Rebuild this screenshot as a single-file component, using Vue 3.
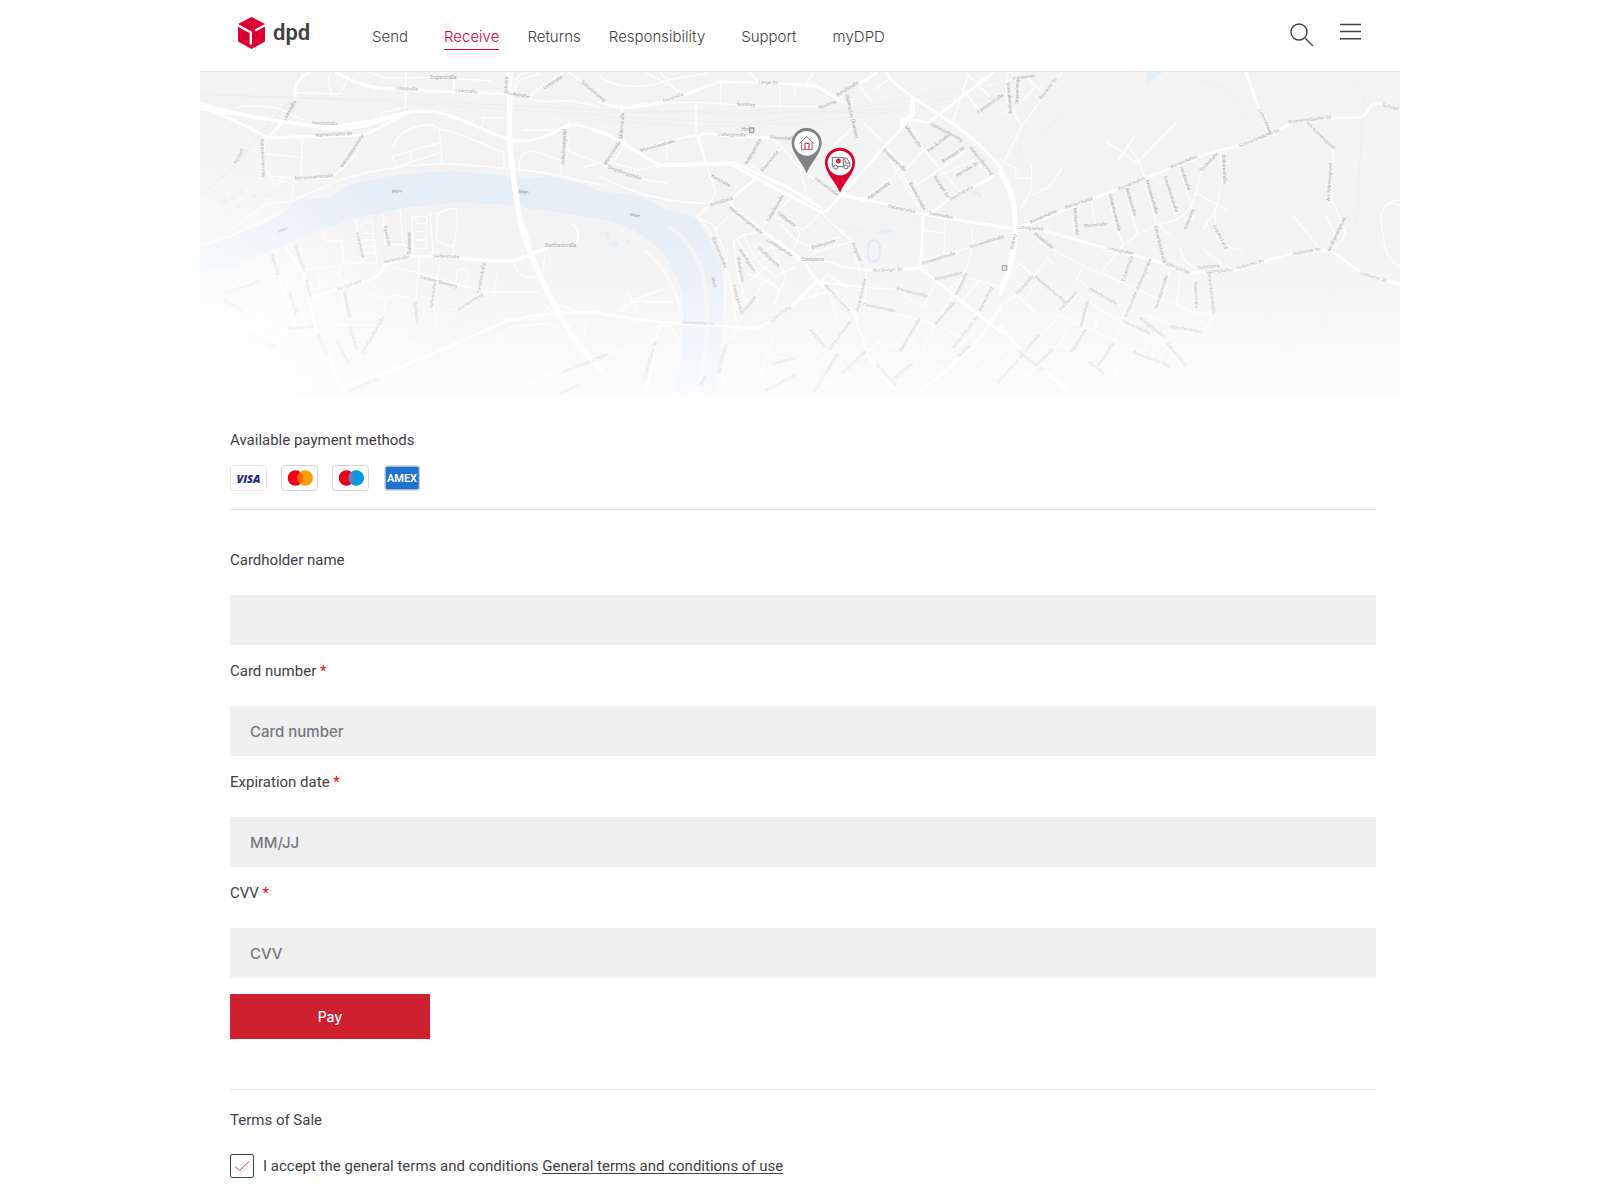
<script setup>
import { ref } from 'vue'

const navItems = [
  { label: 'Send' },
  { label: 'Receive', active: true, wide: true },
  { label: 'Returns' },
  { label: 'Responsibility' },
  { label: 'Support', wide: true },
  { label: 'myDPD', wide: true },
]

const fields = [
  { id: 'holder', label: 'Cardholder name', placeholder: '', required: false },
  { id: 'number', label: 'Card number', placeholder: 'Card number', required: true },
  { id: 'expiry', label: 'Expiration date', placeholder: 'MM/JJ', required: true },
  { id: 'cvv', label: 'CVV', placeholder: 'CVV', required: true },
]
const values = ref({ holder: '', number: '', expiry: '', cvv: '' })
const accepted = ref(true)

// The map is drawn in three sheets of 1200 units: west, centre and east.
const sheets = [
  {
    x: 0,
    rail: ['M0 100L600 128L1200 165', 'M0 106L600 120L1200 150', 'M600 855L760 790L930 735'],
    major: [
      'M0 128C80 160 250 185 380 206C480 215 540 180 620 158C720 135 800 190 900 228L940 245',
      'M0 146C100 160 240 190 380 200C500 195 570 165 640 153',
      'M0 132L205 233L480 226C540 215 570 180 610 165',
      'M935 240C1010 255 1060 215 1100 198C1130 190 1160 200 1200 216',
      'M410 38C470 70 510 88 600 88L770 97L925 102',
      'M330 712L420 685C490 665 545 660 552 615L630 590L720 590L870 603L940 603L1040 565',
      'M425 980C560 950 760 850 920 785C1000 760 1100 755 1200 760',
      'M255 560L310 640L345 800L430 990',
      'M285 115C280 75 300 45 330 38',
      'M252 178L235 200L205 233',
    ],
    motor: ['M930 36L928 230C936 330 945 400 962 490C980 560 1010 630 1050 710L1110 820L1200 930'],
    minor: [
      'M100 142C200 132 240 140 285 170C340 192 430 200 500 180',
      'M288 98L420 102L447 50', 'M390 38L386 70L396 102', 'M510 38L560 54L690 52L870 62',
      'M618 38L616 142L545 158V175', 'M762 52V90', 'M200 235C185 290 190 330 210 348L295 356L390 355C440 315 480 290 485 228',
      'M195 280L300 292', 'M307 235L303 356', 'M210 348L222 375L255 362',
      'M100 505L200 430L270 425L420 360C540 320 680 310 760 312C850 318 960 325 1070 345L1200 375',
      'M582 262C585 220 640 195 700 195L718 210L727 310', 'M575 290L720 248', 'M632 268V312M575 290L590 320L727 276',
      'M718 208C790 220 830 245 912 278V320', 'M848 195V173H920', 'M970 210H1080M958 325C955 290 965 275 1000 272L1080 300L1085 340',
      'M1103 220L1104 272L1200 310M1150 322L1190 312', 'M1105 180V198',
      'M985 110L1040 70L1090 38', 'M1105 36L1200 105', 'M985 115L1020 125L1110 122L1200 140', 'M945 88C940 60 955 38 985 38M945 90L960 60L1020 40',
      'M80 690L215 650L255 640L470 608L530 610', 'M0 560L90 530L250 455',
      'M365 505L380 545L425 540L432 608', 'M465 480L470 500L485 605', 'M550 465L555 550L635 558', 'M600 450L610 555',
      'M636 590V470H648V500', 'M470 500L515 480L530 605', 'M490 520H520M490 540H525M490 560H525M490 580H528',
      'M650 470H680V565H640M650 490H680M650 515H680M650 540H680M690 460L700 590M710 460V545L760 560L765 585M710 465C740 445 765 440 770 450L772 500L760 560',
      'M552 615L660 640L845 695L1020 695', 'M658 600L645 740L658 815', 'M720 598L700 735L712 795', 'M770 650C770 620 800 620 805 640L795 682L765 675Z',
      'M850 615L838 700C820 740 780 745 755 748', 'M890 645L880 700', 'M450 655L425 700L445 800L465 880',
      'M500 700L560 715L545 790L505 870M560 715L590 705L640 715', 'M405 795L510 795L560 800', 'M415 618L422 660M350 615L360 680',
      'M215 590L240 660L280 790L310 870', 'M245 610L275 730L285 800L340 800', 'M175 665L188 770C220 800 240 810 280 810',
      'M190 770L155 815L220 865', 'M65 715L130 755M150 815L225 865M265 910L220 1005', 'M280 360L275 415',
      'M940 600C950 650 980 655 1010 650M1040 570C1060 610 1050 640 1010 625', 'M975 490L1000 600M1035 580L1030 625',
      'M865 870L930 800L1040 790C1080 800 1120 850 1160 900', 'M920 780L1070 775L1040 740', 'M1060 730L1130 755L1200 755',
      'M930 1000L1050 940L1200 895', 'M1160 760L1150 850M1040 560L1130 555C1140 520 1130 495 1115 495',
      'M545 850L600 865L655 840', 'M380 835L410 790M450 915L490 875M405 650L425 620',
    ],
  },
  {
    x: 1200,
    rail: ['M0 150L440 160L900 148L1200 80', 'M0 160L500 150L840 160L1200 110', 'M0 170L460 190L860 130L1200 60', 'M0 180L300 200L600 190L860 160L960 110', 'M960 470L880 530L720 500M610 600L760 600'],
    major: [
      'M0 216C70 240 120 290 180 314L400 308L560 380L665 445',
      'M170 318L390 312L545 395L660 455C690 460 700 425 725 405L850 265C890 220 920 190 940 155L940 130',
      'M860 38C880 80 940 110 1010 160C1080 200 1150 260 1200 320',
      'M925 178L985 188L1060 130L1180 38',
      'M725 405L870 435L970 463L1200 500',
      'M0 125C60 155 140 145 250 105L360 65L530 70L650 78L725 125',
      'M780 70L830 38', 'M1000 455L1050 415L1180 350', 'M485 510L605 600C625 615 630 640 650 662L760 755L805 890L880 985',
      'M650 665C600 720 540 765 500 790C460 815 420 800 340 795C200 795 80 775 0 760',
      'M970 465L962 625L1060 705L1200 815', 'M1200 745L1120 860L950 1008', 'M485 510L395 440C385 410 440 385 470 350',
      'M180 795L160 850C165 900 150 970 125 1008', 'M170 314L318 310L295 235C300 215 330 220 360 225L520 235', 'M800 630L960 625',
    ],
    motor: ['M940 118L935 150M905 190L940 160'],
    minor: [
      'M100 135C260 120 380 130 440 138L660 140L725 110', 'M65 135L72 250L40 310L120 330L170 315', 'M140 38L250 100', 'M0 50C50 90 150 85 200 60L320 40',
      'M180 36L245 110', 'M362 65V135M540 70V140M450 36L480 70M580 70L585 100M620 70L640 38',
      'M288 135V220M200 240V310M125 270L210 240L295 225', 'M520 235L545 260L600 325L620 405',
      'M318 310L345 390', 'M0 310L110 355L200 370', 'M0 350C100 400 200 430 330 430L345 400', 'M290 470L330 435L390 415',
      'M290 470C340 510 350 570 385 640L405 760L410 800', 'M295 475L340 495L380 590L375 760', 'M725 122C770 150 770 200 730 230L690 265',
      'M548 260L480 330L425 300', 'M550 395L520 450L485 510', 'M580 405L520 470L610 510L660 460', 'M615 340L700 390L722 405',
      'M665 460L755 545L780 640', 'M540 490L590 545L640 560L720 530', 'M610 600L650 575L755 545M605 605L670 600L730 620L795 630',
      'M485 515L430 525L400 545L415 650L430 700', 'M430 525L470 600L525 650L590 620', 'M415 545L475 640L540 690L560 650L545 625',
      'M440 640L490 660L470 700L430 765M490 660L540 690L520 740', 'M500 620L450 660M470 580L520 560L600 605M560 470L600 520L580 570',
      'M850 265L960 450', 'M850 255L905 310L880 350L790 415', 'M925 180L970 270L905 340L970 450M970 270L1045 235', 'M970 270L1085 400M945 380L1100 270',
      'M1010 350L1120 300L1180 350', 'M1200 110L1140 155L1090 90', 'M820 90L870 55M780 80L815 125M790 190L845 240',
      'M970 510L1035 520V460M1035 520L1030 600M975 600L1120 560L1200 540', 'M800 630L795 740L760 755',
      'M1115 500C1125 600 1085 660 1050 720', 'M1000 680L970 740L930 720L900 690L770 680L650 665', 'M790 735L880 760L960 780L930 860L830 850L800 880',
      'M1045 690L1090 650L1200 680M1060 705L1010 780L945 920L880 985', 'M1090 720L1140 660M1180 680L1140 760L1070 850',
      'M960 780L1020 800L1100 840M840 840L800 880L720 940L650 1000', 'M760 755L690 865L640 800M690 865L600 895L500 890M690 865L630 960L560 1000',
      'M690 870L740 930L770 1000M500 890L480 940L580 1000M520 840L500 890', 'M1000 900L1060 960L1090 1005M1100 880L1200 960M920 910L1000 960',
      'M130 570C200 620 235 700 250 790', 'M60 755L95 725H220M85 695L110 750M100 720L195 685', 'M375 800V835L400 830L425 800M375 835L370 980L340 1008',
      'M165 800H215L230 830L240 860M0 890L75 870L100 840M0 950L40 1008', 'M370 990L440 970L480 935', 'M600 720L700 690M690 700L710 780',
      'M345 510L385 470M500 520L540 620M450 600L480 580M640 710L680 640L740 680', 'M1060 180L1100 60M1100 40L1170 110',
    ],
  },
  {
    x: 2400,
    rail: ['M50 320L250 80M100 100L50 300', 'M600 60L690 90L740 190', 'M1060 60L1090 110L1070 490', 'M960 820L900 840L820 890M1000 640L960 820'],
    major: [
      'M45 500L95 490L280 415L436 355L600 290L660 270L720 258L820 222L880 185L990 173L1080 172C1110 165 1100 125 1140 130L1200 150',
      'M0 503L50 503L130 512L330 568L495 610L570 640L710 630L800 602L890 578L985 570C1030 590 1060 630 1100 645L1200 672',
      'M738 38L780 155L805 215', 'M0 800L80 890L200 990',
    ],
    motor: ['M0 335C40 400 45 430 46 510C45 600 20 650 0 700'],
    minor: [
      'M185 38L130 110L65 200L25 280L0 330', 'M20 38V120L65 195M0 165L30 150M20 60L80 50L130 100M80 50L105 80L60 130M35 38L60 90',
      'M0 300L45 325L50 355H95V315M95 355L90 400L60 450M95 405L150 380L185 325',
      'M320 245L420 315L436 355M415 305L528 188M355 300L405 228M380 250L420 310', 'M275 430L285 490M220 450L225 515M250 500L320 495L345 485',
      'M325 405L345 490L370 555L410 525L470 495L530 480C580 450 580 420 600 350L610 320L655 280', 'M375 390L412 520', 'M436 360L468 490L468 520L490 600',
      'M490 345L530 480', 'M540 325L575 440L580 470L560 505', 'M585 300L605 320', 'M660 275L668 350L650 440L612 505M668 300L690 312',
      'M645 445L645 520C660 560 700 565 728 572M590 400L680 450', 'M470 490L510 525M370 555L305 635', 'M540 565C550 600 570 620 590 625M612 565C630 600 660 590 660 612L595 628',
      'M920 190C990 240 1005 270 1000 300L990 410C1010 450 1030 490 1035 520C1030 550 1000 560 985 570', 'M880 468L960 565M980 468C1000 510 1010 530 1000 550',
      'M1200 420C1120 430 1145 500 1150 530C1155 590 1180 610 1200 620M1160 430L1200 435',
      'M105 520C120 560 140 555 250 618L360 665L460 710L580 755L635 765', 'M250 618L230 655L270 690L370 740', 'M140 590L160 610M60 610L100 650L40 710L0 740M60 610L0 680',
      'M145 595L100 650L190 725L225 700L370 790L500 860L545 910L690 1005', 'M395 590L370 660M450 605L415 690L380 770L340 850L300 920',
      'M510 635L470 755M540 650L530 735M515 625L580 660L585 750M625 645L635 765C635 800 610 815 570 815L440 765', 'M45 700L110 760M80 710L110 670',
      'M235 700L180 765L80 870L0 960', 'M265 730L250 800L220 870M170 765L300 820L400 870L540 930L530 1000', 'M290 780L285 810M205 800L180 850L120 910L70 960',
      'M180 850L300 935L390 985M350 920L340 980M440 850L420 890M465 860L450 910M490 870L475 920', 'M430 950L400 1000M430 965L500 1000', 'M0 880L100 960L150 1000M1140 1005L1170 985',
    ],
  },
]

// Each label runs from its first point to its second.
const streets = [
  ['Englerstraße', 692, 55, 768, 55], ['Linkstraße', 590, 88, 652, 90], ['Linkstraße', 768, 95, 830, 98], ['Linkstraße', 923, 102, 985, 112],
  ['Linkstraße', 1038, 84, 1084, 54], ['Schönbergweg', 1145, 68, 1210, 122], ['Schulstr', 922, 96, 924, 50], ['Horchstraße', 338, 190, 411, 194],
  ['Mainaschaffer Str', 350, 228, 454, 223], ['Linkstraße', 258, 178, 288, 125], ['Mörswiesenstraße', 195, 342, 190, 240], ['Mörswiesenstraße', 432, 315, 488, 230],
  ['Mörswiesenstraße', 290, 357, 393, 349], ['Aschaff', 108, 310, 132, 268], ['Schieferwegwald', 1093, 303, 1098, 215], ['Kastanienstr', 468, 518, 484, 590],
  ['Egerer Str', 552, 503, 562, 552], ['Sudetenstr', 633, 580, 633, 515], ['Seidelstraße', 556, 608, 625, 593], ['Seidelstraße', 702, 591, 774, 593],
  ['Stadtbadstraße', 1043, 560, 1120, 560], ['Am Dreispitz', 415, 690, 484, 665], ['Leiderer Stadtweg', 667, 655, 765, 680], ['Kapellenstraße', 840, 693, 855, 612],
  ['Hafenstraße', 698, 738, 708, 673], ['Ruhlandstr', 640, 728, 648, 788], ['Eisenbahnweg', 785, 745, 840, 710], ['Fliederstraße', 283, 560, 308, 630],
  ['Tulpenweg', 212, 585, 230, 640], ['Augasse', 316, 662, 326, 706], ['Großostheimer Str', 92, 695, 168, 670], ['Lindenstraße', 265, 697, 282, 755],
  ['Ostendstraße', 430, 698, 443, 765], ['Rosenstraße', 270, 808, 338, 802], ['Hauptstraße', 443, 795, 468, 876], ['Hafenbahnhofstraße', 495, 872, 550, 778],
  ['Waldstraße', 352, 828, 375, 880], ['Germanenstr', 410, 848, 440, 905], ['Darmstädter Str', 448, 995, 535, 960], ['Bergstraße', 67, 720, 128, 755],
  ['Heinrichstraße', 145, 820, 225, 865], ['Kleine Schönbuschallee', 1100, 935, 1210, 890], ['Hafenweg', 1092, 998, 1130, 980],
  ['Deustraße', 1392, 125, 1450, 105], ['Lange Str', 1677, 69, 1732, 71], ['Nordring', 1613, 135, 1662, 137], ['Nordring', 1860, 145, 1905, 127],
  ['Auhofstraße', 1915, 106, 1974, 70], ['Müllerstraße', 1268, 230, 1272, 160], ['Maximilianstraße', 1328, 272, 1420, 246], ['Münchstraße', 1220, 310, 1260, 248],
  ['Ludwigstraße', 1556, 226, 1636, 228], ['Elisenstraße', 1712, 235, 1784, 238], ['Hbf', 1625, 211, 1645, 211], ['Dingelbergstraße', 1228, 325, 1316, 356],
  ['Karlstraße', 1535, 350, 1585, 378], ['Kolpingstraße', 1645, 305, 1680, 245], ['Elisenstraße', 1692, 328, 1732, 280], ['Glattbacher Überfahrt', 1940, 120, 1962, 216],
  ['Schloßberg', 1538, 435, 1592, 418], ['Weißenburgerstraße', 1602, 455, 1668, 508], ['Luitpoldstraße', 1708, 480, 1750, 408], ['Treibgasse', 1735, 462, 1778, 496],
  ['Heinsestraße', 1848, 360, 1906, 402], ['Landingstraße', 1702, 542, 1772, 588], ['Platanenallee', 2066, 440, 2143, 457], ['Lindenallee', 2190, 463, 2255, 474],
  ['Fabrikstraße', 2010, 415, 2068, 372], ['Ernsthofstraße', 2050, 273, 2110, 330], ['Ernsthofstraße', 2128, 372, 2168, 446], ['Merlostraße', 2115, 200, 2158, 260],
  ['Fabrikstraße', 2190, 272, 2245, 230], ['Hohenzollernring', 2193, 195, 2283, 242], ['Hohenzollernring', 2310, 265, 2370, 340], ['Breslauer Str', 2232, 305, 2293, 266],
  ['Memeler Str', 2275, 347, 2334, 312], ['Danziger Str', 2202, 352, 2240, 410], ['Deschstraße', 2254, 418, 2318, 383], ['Fasanenstraße', 2345, 152, 2402, 112],
  ['Würzburger Str', 2020, 633, 2106, 629], ['Grünewaldstraße', 2175, 610, 2258, 584], ['Grünewaldstraße', 2322, 560, 2402, 535], ['Hofgasse', 1955, 552, 1976, 600],
  ['Badergasse', 1842, 563, 1900, 545], ['Sandgasse', 1812, 602, 1865, 602], ['Pfaffengasse', 1678, 570, 1730, 615], ['Schloßgasse', 1618, 572, 1658, 630],
  ['Webergasse', 1610, 592, 1624, 660], ['Suicardusstraße', 1538, 538, 1570, 616], ['Dalbergstraße', 1598, 675, 1620, 754], ['Stiftsgasse', 1625, 767, 1672, 705],
  ['Wermbachstraße', 1874, 680, 1943, 750], ['Löherstraße', 1715, 785, 1772, 742], ['Alexandrastraße', 1976, 750, 1998, 660], ['Cornelienstraße', 1992, 736, 2080, 755],
  ['Brentanostraße', 2100, 690, 2170, 708], ['Herrleinstraße', 2212, 790, 2264, 730], ['Darmstädter Str', 1448, 790, 1542, 794], ['Südring', 2280, 890, 2310, 857],
  ['Stadelmannstraße', 2108, 868, 2158, 782], ['Lamprechtstraße', 1895, 863, 1950, 790], ['Hefner-Alteneck-Str', 2270, 855, 2328, 780], ['Am Floßhafen', 1562, 935, 1580, 855],
  ['Großostheimer Str', 1340, 945, 1370, 845], ['Yorckstraße', 2270, 710, 2305, 635], ['Kneippstraße', 2212, 658, 2278, 642], ['Bismarckring', 2340, 760, 2382, 675],
  ['Hohenlohstraße', 1930, 940, 1998, 876], ['Lindestraße', 1725, 912, 1776, 898], ['Bodelschwinghstraße', 1855, 980, 1908, 895], ['Mattstraße', 2080, 960, 2144, 908],
  ['Kirchnerstraße', 2022, 910, 2092, 985], ['Kantstraße', 1830, 812, 1870, 862], ['Bergmannstraße', 1705, 990, 1785, 948],
  ['Frankenstr', 2444, 58, 2500, 50], ['Deutsche Str', 2527, 113, 2570, 58], ['Schwalbenweg', 2420, 74, 2428, 150], ['Drosselweg', 2455, 125, 2456, 62],
  ['Bismarckallee', 2495, 488, 2568, 456], ['Bismarckallee', 2600, 444, 2676, 418], ['Bismarckallee', 2758, 388, 2834, 357], ['Bismarckallee', 2916, 323, 2990, 292],
  ['Schmerlenbacher Str', 3124, 258, 3236, 214], ['Schmerlenbacher Str', 3270, 188, 3390, 174], ['Schmerl', 3548, 137, 3594, 149], ['Lohmühlweg', 3178, 155, 3205, 214],
  ['Am Krämersgrund', 3322, 193, 3396, 263], ['Am Krämersgrund', 3390, 414, 3396, 315], ['Am Krämersgrund', 3395, 562, 3432, 485], ['Yorckstraße', 3008, 330, 3052, 284],
  ['Kolbornstraße', 3066, 288, 3070, 362], ['Arndtstraße', 2941, 325, 2962, 385], ['Scharnhorststraße', 2889, 345, 2926, 457], ['Gneisenaustraße', 2838, 363, 2865, 455],
  ['Blücherstraße', 2777, 388, 2800, 462], ['Scharnhorststraße', 2727, 408, 2753, 507], ['Moltkestraße', 2620, 448, 2627, 518], ['Steinstraße', 2655, 500, 2720, 494],
  ['Kolbornstr', 2960, 505, 2983, 450], ['Lug ins Land', 3043, 502, 3072, 560], ['Rhönstraße', 2505, 525, 2552, 562], ['Ludwigsallee', 2453, 504, 2526, 510],
  ['Ludwigsallee', 2722, 566, 2798, 583], ['Ludwigsallee', 2895, 610, 2965, 640], ['Ludwigsallee', 3020, 637, 3096, 632], ['Haibacher Str', 3114, 626, 3190, 605],
  ['Haibacher Str', 3282, 583, 3360, 570], ['Haibacher Str', 3482, 642, 3558, 664], ['Sodenberg', 2997, 626, 3054, 619], ['Bessenbachstraße', 2866, 513, 2885, 592],
  ['Tulpenstraße', 2775, 656, 2797, 595], ['Hollerbergstraße', 2820, 680, 2850, 608], ['Rotenbuchstraße', 2868, 757, 2908, 634], ['Kaiserstraße', 2982, 662, 2985, 746],
  ['Schmittbuschstraße', 3024, 648, 3035, 746], ['Altdorferstraße', 2670, 690, 2743, 730], ['Kneippstraße', 2782, 767, 2810, 700], ['Bessenbacher Weg', 2508, 655, 2588, 723],
  ['Yorckstraße', 2456, 698, 2498, 653], ['Flachstraße', 2586, 748, 2630, 700], ['Mozartstraße', 2648, 795, 2666, 726], ['Cranachstraße', 2771, 787, 2845, 820],
  ['Röntgengraben', 2820, 777, 2888, 830], ['Altdorferstraße', 2915, 803, 2996, 816], ['Cranachstraße', 2905, 858, 2948, 912], ['Bessenbacher Weg', 2805, 880, 2902, 918],
  ['Kneippstraße', 2700, 915, 2740, 855], ['Händelstraße', 2622, 870, 2656, 815], ['Fichtestraße', 2476, 878, 2518, 828], ['Würzburger Str', 2458, 880, 2525, 930],
  ['Südring', 2440, 566, 2448, 523], ['Kantstraße', 2518, 912, 2560, 870], ['Rhönweg', 2662, 908, 2710, 940], ['Schweinheimer Str', 2405, 958, 2462, 895],
]
const waterNames = [
  ['Main', 575, 397, 606, 395], ['Main', 955, 397, 986, 399], ['Main', 236, 518, 266, 505],
  ['Main', 1290, 466, 1320, 471], ['Main', 1533, 650, 1542, 682], ['Main', 1505, 975, 1520, 948],
]

function along([, x1, y1, x2, y2]) {
  const angle = (Math.atan2(y2 - y1, x2 - x1) * 180) / Math.PI
  return `translate(${(x1 + x2) / 2} ${(y1 + y2) / 2 + 2}) rotate(${angle.toFixed(1)})`
}
</script>

<template>
  <div class="page">
    <header class="header">
      <a class="logo" href="#" aria-label="dpd">
        <svg viewBox="115 50 80 95" aria-hidden="true">
          <path d="M155 50L195 71V123L155 145L115 123V71Z" fill="#dc0032" />
          <path d="M112 73L153 96V132M198 73L166 90" fill="none" stroke="#fff" stroke-width="7" />
        </svg>
        <span>dpd</span>
      </a>
      <nav>
        <ul class="nav">
          <li v-for="item in navItems" :key="item.label" :class="{ wide: item.wide }">
            <a href="#" :class="{ active: item.active }">{{ item.label }}</a>
          </li>
        </ul>
      </nav>
      <div class="tools">
        <button type="button" aria-label="Search">
          <svg class="search" viewBox="0 0 24 24" fill="none" stroke="#414042">
            <circle cx="9" cy="9" r="8" stroke-width="1.4" />
            <path d="M15.5 15.5L23 23" stroke-width="1.4" />
          </svg>
        </button>
        <button type="button" aria-label="Menu">
          <svg class="burger" viewBox="0 0 21 17" stroke="#414042" stroke-width="1.5">
            <path d="M0 1.5H21M0 8.5H21M0 15.8H21" />
          </svg>
        </button>
      </div>
    </header>

    <svg class="map" viewBox="0 36 3600 972" role="img" aria-label="Delivery map">
      <defs>
        <linearGradient id="fade-down" x1="0" y1="0" x2="0" y2="1">
          <stop offset="0.5" stop-color="#fff" stop-opacity="0" />
          <stop offset="1" stop-color="#fff" stop-opacity="0.78" />
        </linearGradient>
        <radialGradient id="fade-corner" gradientUnits="userSpaceOnUse" cx="0" cy="850" r="700">
          <stop offset="0" stop-color="#fff" stop-opacity="0.9" />
          <stop offset="0.35" stop-color="#fff" stop-opacity="0.65" />
          <stop offset="1" stop-color="#fff" stop-opacity="0" />
        </radialGradient>
      </defs>
      <rect y="36" width="3600" height="972" fill="#f3f3f3" />
      <g fill="#e4eef7">
        <path d="M0 560L100 525L200 490L250 455L290 420L390 412L450 372L560 350L650 340L760 333L900 345L985 357L1040 347L1150 372L1200 393L1330 412L1390 447L1485 472C1510 510 1550 570 1565 620L1570 760L1560 900L1545 1008H1420L1445 900L1450 750C1448 690 1430 640 1390 580C1340 530 1280 490 1200 478L1060 455L900 432L760 428L600 445L450 480L330 520L240 560L100 620L0 640Z" />
        <path d="M2843 36H2890L2870 50L2842 70Z" />
        <path d="M1210 518L1220 512L1232 535L1222 540ZM1230 548L1245 540L1258 555L1240 570ZM1280 543L1288 540L1292 550L1284 552Z" />
        <path d="M2030 520L2045 507L2080 510L2078 516L2045 522ZM2315 395L2330 385L2340 400L2348 415L2330 405Z" />
        <path d="M62 418l16-4 4 12-14 4zM88 408l16-4 4 12-14 4zM112 392l16-4 4 12-14 4zM78 450l14-4 4 10-12 4zM105 436l16-4 4 12-14 4zM150 404l16-4 4 12-14 4zM190 402l26-4-6 12-14 4z" />
      </g>
      <path d="M2008 546L2004 560V590L2012 606L2028 604L2038 590L2040 556L2030 542H2014Z" fill="none" stroke="#dfeaf5" stroke-width="7" />
      <path d="M300 36L275 120L180 220L110 310L0 410" fill="none" stroke="#e6eff7" stroke-width="6" />
      <path d="M1405 500C1460 530 1500 600 1512 660C1530 760 1520 890 1490 1008" fill="none" stroke="#f1f3f4" stroke-width="13" />
      <g v-for="sheet in sheets" :key="sheet.x" :transform="`translate(${sheet.x} 0)`" class="roads">
        <path v-for="d in sheet.rail" :key="d" :d="d" class="rail" />
        <path v-for="d in sheet.minor" :key="d" :d="d" class="minor" />
        <path v-for="d in sheet.major" :key="d" :d="d" class="major" />
        <path v-for="d in sheet.motor" :key="d" :d="d" class="motor" />
      </g>
      <g class="street-names">
        <text v-for="(s, i) in streets" :key="i" :transform="along(s)">{{ s[0] }}</text>
      </g>
      <g class="water-names">
        <text v-for="(s, i) in waterNames" :key="i" :transform="along(s)">{{ s[0] }}</text>
      </g>
      <g fill="#e6e6e6" stroke="#a0a0a0" stroke-width="4">
        <path d="M1649 204H1661V217H1649ZM2407 617H2420V631H2407Z" />
      </g>
      <rect y="36" width="3600" height="972" fill="url(#fade-down)" />
      <rect y="36" width="800" height="972" fill="url(#fade-corner)" />

      <g>
        <path d="M1820 340C1808 308 1775 280 1775 249A45 45 0 0 1 1865 249C1865 280 1832 308 1820 340Z" fill="#808285" />
        <circle cx="1820" cy="250" r="37" fill="#fff" />
        <path d="M1799 250L1820 230L1841 250M1805 247V269H1836V247" fill="none" stroke="#6d6e71" stroke-width="3" />
        <path d="M1815 268V250H1827V268" fill="none" stroke="#dc0032" stroke-width="3" />
      </g>
      <g>
        <path d="M1920 398C1908 366 1875 339 1875 308A45 45 0 0 1 1965 308C1965 339 1932 366 1920 398Z" fill="#dc0032" />
        <circle cx="1920" cy="309" r="37" fill="#fff" />
        <path d="M1901 320H1897V292H1930V320M1930 294H1940L1949 308V320H1945M1913 320H1932M1934 296L1937 309H1948" fill="none" stroke="#6d6e71" stroke-width="3" />
        <g fill="#fff" stroke="#6d6e71" stroke-width="3">
          <circle cx="1907" cy="321" r="6" /><circle cx="1938" cy="321" r="6" />
        </g>
        <path d="M1915 295L1922 299V307L1915 311L1908 307V299Z" fill="#dc0032" />
        <path d="M1908 300L1915 304V310M1922 300L1917 303" fill="none" stroke="#fff" stroke-width="1" />
      </g>
    </svg>

    <main class="content">
      <h2>Available payment methods</h2>
      <ul class="cards">
        <li>
          <svg viewBox="0 0 37 26" role="img" aria-label="Visa">
            <rect x="0.5" y="0.5" width="36" height="25" rx="2.5" fill="#fff" stroke="#e6e6e6" />
            <text x="18.5" y="17.5" text-anchor="middle" class="visa">VISA</text>
          </svg>
        </li>
        <li>
          <svg viewBox="0 0 37 26" role="img" aria-label="Mastercard">
            <rect x="0.5" y="0.5" width="36" height="25" rx="3.5" fill="#fff" stroke="#d6d6d6" />
            <circle cx="14.5" cy="13" r="7.8" fill="#eb001b" /><circle cx="24.2" cy="13" r="7.8" fill="#ff9f00" />
            <path d="M19.3 7a7.8 7.8 0 0 1 0 12a7.8 7.8 0 0 1 0-12z" fill="#ff5f00" />
          </svg>
        </li>
        <li>
          <svg viewBox="0 0 37 26" role="img" aria-label="Maestro">
            <rect x="0.5" y="0.5" width="36" height="25" rx="3.5" fill="#fff" stroke="#d6d6d6" />
            <circle cx="14.5" cy="13" r="7.8" fill="#eb001b" /><circle cx="24.2" cy="13" r="7.8" fill="#009be1" />
            <path d="M19.3 7a7.8 7.8 0 0 1 0 12a7.8 7.8 0 0 1 0-12z" fill="#7673c0" />
          </svg>
        </li>
        <li>
          <svg viewBox="0 0 37 26" role="img" aria-label="American Express">
            <rect x="2" y="1" width="34.5" height="24" rx="2.5" fill="#1f72cd" stroke="#ccd3da" stroke-width="1.4" />
            <text x="19" y="17" text-anchor="middle" class="amex">AMEX</text>
          </svg>
        </li>
      </ul>

      <form class="form" @submit.prevent>
        <div v-for="f in fields" :key="f.id" class="field">
          <label :for="f.id">{{ f.label }} <span v-if="f.required" class="star">*</span></label>
          <input :id="f.id" v-model="values[f.id]" type="text" :placeholder="f.placeholder" />
        </div>
        <button class="pay" type="submit">Pay</button>
      </form>

      <section class="terms">
        <h2>Terms of Sale</h2>
        <div class="accept">
          <span class="box">
            <input id="accept" v-model="accepted" type="checkbox" />
            <svg v-if="accepted" viewBox="0 0 24 24" fill="none" stroke="#f0354b" aria-hidden="true">
              <path d="M5 12.5L9.5 16.5L19 7.5" />
            </svg>
          </span>
          <p>
            <label for="accept">I accept the general terms and conditions</label>{{ ' ' }}<a href="#">General terms and conditions of use</a>
          </p>
        </div>
      </section>
    </main>
  </div>
</template>

<style>
body {
  background: #fff;
}
</style>

<style scoped>
.page {
  max-width: 1200px;
  margin: 0 auto;
  color: #414042;
  font: 400 15px/24px Roboto, sans-serif;
}
.page * {
  box-sizing: border-box;
}
ul,
h2,
p {
  margin: 0;
  padding: 0;
  list-style: none;
  font: inherit;
}
button {
  border: 0;
  padding: 0;
  background: none;
  cursor: pointer;
}
.header {
  display: flex;
  align-items: flex-start;
  height: 72px;
  padding: 0 39px 0 38px;
  border-bottom: 1px solid #e3e3e3;
}
.logo {
  display: flex;
  gap: 8px;
  width: 134px;
  padding-top: 17px;
  color: #414042;
  font: 600 22px/32px Roboto, sans-serif;
  text-decoration: none;
}
.logo svg {
  width: 27px;
  height: 32px;
}
.nav {
  display: flex;
  padding-top: 25px;
}
.nav li {
  margin-right: 28px;
}
.nav li.wide {
  margin-left: 8px;
}
.nav a {
  display: block;
  border-bottom: 1px solid transparent;
  color: #414042;
  font: 300 15px/24px Inter, sans-serif;
  text-decoration: none;
}
.nav a.active {
  border-color: #dc0032;
  color: #dc0032;
}
.tools {
  display: flex;
  gap: 26px;
  margin-left: auto;
  padding-top: 23px;
}
.tools svg {
  display: block;
}
.search {
  width: 24px;
  height: 24px;
}
.burger {
  width: 21px;
  height: 17px;
  margin-bottom: 7px;
}
.map {
  display: block;
  width: 100%;
}
.roads path {
  fill: none;
  stroke: #fff;
  stroke-linecap: round;
  stroke-linejoin: round;
}
.roads .rail {
  stroke: #ebebeb;
  stroke-width: 2;
}
.roads .minor {
  stroke-width: 4;
  opacity: 0.85;
}
.roads .major {
  stroke-width: 9;
}
.roads .motor {
  stroke-width: 16;
}
.street-names text,
.water-names text {
  fill: #a6a6a6;
  font: 400 14px Roboto, sans-serif;
  text-anchor: middle;
}
.water-names text {
  fill: #8d99a5;
}
.content {
  padding: 32px 24px 22px 30px;
}
.cards {
  display: flex;
  gap: 14px;
  margin-top: 13px;
  padding-bottom: 18px;
  border-bottom: 1px solid #e3e3e3;
}
.cards svg {
  display: block;
  width: 37px;
  height: 26px;
}
.visa {
  fill: #1a2b86;
  font: italic 800 11px "Open Sans", sans-serif;
}
.amex {
  fill: #fff;
  font: 600 11px Roboto, sans-serif;
}
.form {
  display: flex;
  flex-direction: column;
  align-items: flex-start;
  gap: 14px;
  padding: 38px 0 50px;
  border-bottom: 1px solid #e3e3e3;
}
.field {
  display: flex;
  flex-direction: column;
  gap: 23px;
  width: 100%;
}
.star {
  color: #f00;
}
.field input {
  width: 100%;
  height: 50px;
  border: 0;
  border-radius: 0;
  padding: 0 20px;
  background: #f0f0f0;
  color: #414042;
  font: 500 15px Inter, sans-serif;
}
.field input::placeholder {
  color: #75787d;
  opacity: 1;
}
.pay {
  width: 200px;
  height: 45px;
  margin-top: 2px;
  background: #ce202f;
  color: #fff;
  font: 500 14px Inter, sans-serif;
}
.terms {
  padding-top: 18px;
}
.accept {
  display: flex;
  gap: 9px;
  margin-top: 22px;
}
.box {
  position: relative;
  width: 24px;
  height: 24px;
}
.box input {
  display: block;
  width: 24px;
  height: 24px;
  margin: 0;
  border: 1px solid #414042;
  border-radius: 2px;
  background: #fff;
  appearance: none;
}
.box svg {
  position: absolute;
  inset: 0;
  pointer-events: none;
}
.accept a {
  color: inherit;
  text-underline-offset: 2px;
}
</style>
